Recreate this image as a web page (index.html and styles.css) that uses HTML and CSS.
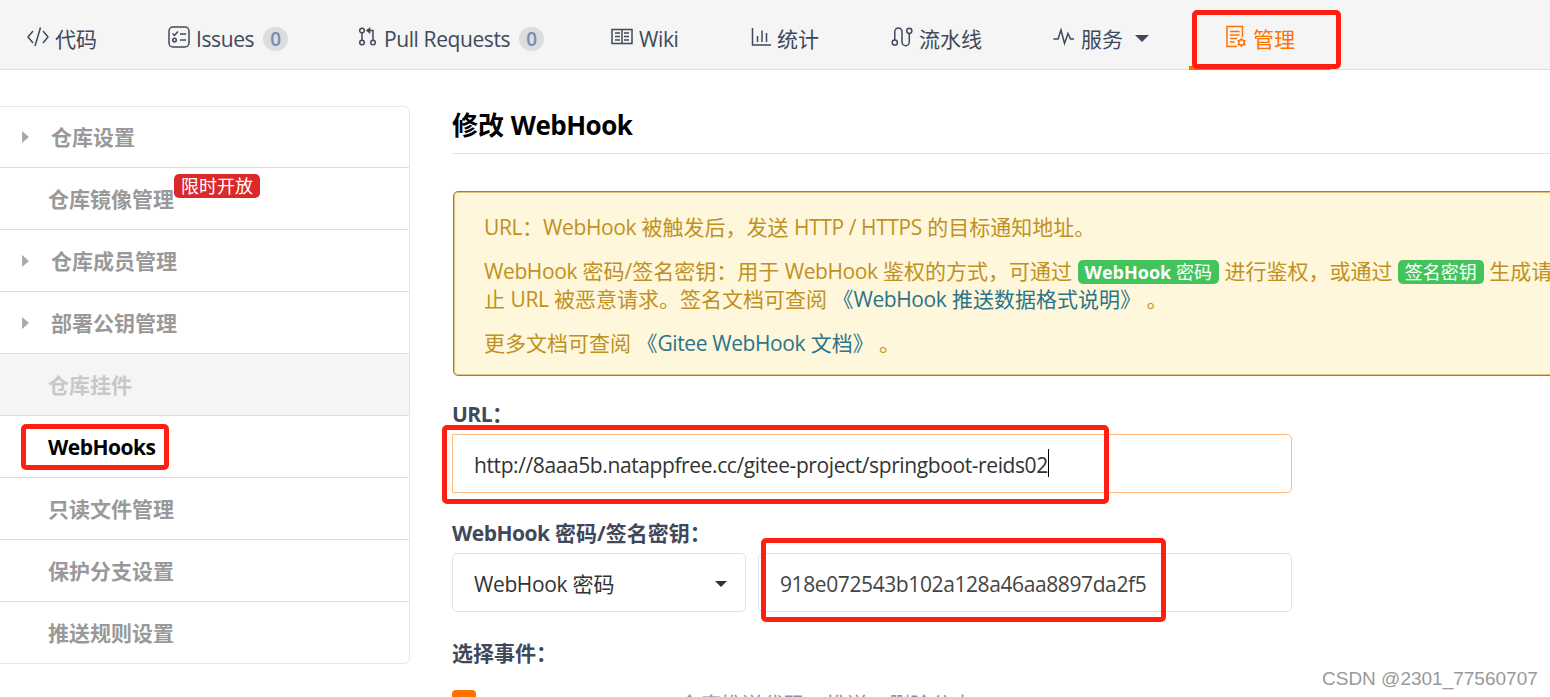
FILE: index.html
```html
<!DOCTYPE html>
<html lang="zh-CN">
<head>
    <meta charset="UTF-8">
    <meta name="viewport" content="width=device-width, initial-scale=1.0">
    <title>修改 WebHook</title>
    <link rel="stylesheet" href="styles.css">
</head>
<body>
    <!-- Repository tabs -->
    <nav class="repo-nav">
        <a class="nav-item first">
            <svg class="icon" width="22" height="22" viewBox="0 0 22 22"><path d="M6 5L1 11l5 6M16 5l5 6-5 6M13.5 1.500l-5.500 18.500"/></svg>
            <span>代码</span>
        </a>
        <a class="nav-item">
            <svg class="icon" width="22" height="22" viewBox="0 0 22 22"><rect x="1" y="1" width="20" height="20" rx="4"/><path d="M4.500 7.500l2 2 3.500-4M12 8h6M12 14h6"/><circle cx="6.500" cy="14" r="1.800"/></svg>
            <span class="en">Issues</span>
            <span class="count">0</span>
        </a>
        <a class="nav-item">
            <svg class="icon pr" width="20" height="22" viewBox="0 0 20 22"><circle cx="4" cy="4.500" r="2.300"/><circle cx="4" cy="16.500" r="2.300"/><circle cx="15" cy="16.500" r="2.300"/><path d="M4 7v7M15 14V4.500H9M11.500 2.500L9 4.500l2.500 2z"/></svg>
            <span class="en">Pull Requests</span>
            <span class="count">0</span>
        </a>
        <a class="nav-item">
            <svg class="icon" width="22" height="22" viewBox="0 0 22 22"><rect x="1" y="3.500" width="20" height="14"/><path d="M11 3.500v14M4 7h5M4 10.500h5M4 14h5M13 7h5M13 10.500h5M13 14h5"/></svg>
            <span class="en">Wiki</span>
        </a>
        <a class="nav-item">
            <svg class="icon" width="20" height="22" viewBox="0 0 20 22"><path d="M1.500 2v17H20M6.500 10v6M11 4.500v11.500M15.500 7v9"/></svg>
            <span>统计</span>
        </a>
        <a class="nav-item">
            <svg class="icon" width="22" height="22" viewBox="0 0 22 22"><circle cx="3.800" cy="16.500" r="2.600"/><circle cx="18.300" cy="4.800" r="2.600"/><path d="M3.800 14V5.500a3.400 3.400 0 0 1 7.200 0v10.500a3.600 3.600 0 0 0 7.300 0V7.500"/></svg>
            <span>流水线</span>
        </a>
        <a class="nav-item">
            <svg class="icon" width="22" height="22" viewBox="0 0 22 22"><path d="M.5 13H5l3-9 3.500 13.500 3.500-10 2.500 5.500H21"/></svg>
            <span>服务</span>
            <span class="caret"></span>
        </a>
        <a class="nav-item active">
            <svg class="icon" width="22" height="24" viewBox="0 0 22 24"><path d="M17.500 12V1.500H2v20h10M5 6.500h9.500M5 10h9.500M5 13.500h7M5 17h4.500"/><circle cx="16.500" cy="17.500" r="2.800"/><path d="M16.500 13v2M16.500 20v2M12.600 15.300l1.700 1M18.800 18.800l1.700 1M12.600 19.800l1.700-1M18.800 16.300l1.700-1"/></svg>
            <span>管理</span>
        </a>
    </nav>

    <div class="page">
        <!-- Settings menu -->
        <aside class="side-menu">
            <a class="menu-item expand"><i class="arrow"></i>仓库设置</a>
            <a class="menu-item">仓库镜像管理<span class="tag">限时开放</span></a>
            <a class="menu-item expand"><i class="arrow"></i>仓库成员管理</a>
            <a class="menu-item expand"><i class="arrow"></i>部署公钥管理</a>
            <a class="menu-item disabled">仓库挂件</a>
            <a class="menu-item current"><span class="en-bold">WebHooks</span></a>
            <a class="menu-item">只读文件管理</a>
            <a class="menu-item">保护分支设置</a>
            <a class="menu-item">推送规则设置</a>
        </aside>

        <main class="content">
            <h1>修改 <span class="en-title">WebHook</span></h1>

            <div class="message">
                <p><span class="en">URL</span>：<span class="en">WebHook</span> 被触发后，发送 <span class="en">HTTP / HTTPS</span> 的目标通知地址。</p>
                <p><span class="en">WebHook</span> 密码/签名密钥：用于 <span class="en">WebHook</span> 鉴权的方式，可通过 <span class="label"><b>WebHook</b> 密码</span> 进行鉴权，或通过 <span class="label">签名密钥</span> 生成请求签名<br>止 <span class="en">URL</span> 被恶意请求。签名文档可查阅 <a class="link">《<span class="en">WebHook</span> 推送数据格式说明》</a> 。</p>
                <p>更多文档可查阅 <a class="link">《<span class="en">Gitee WebHook</span> 文档》</a> 。</p>
            </div>

            <form>
                <label class="field-label"><span class="en-bold">URL</span>：</label>
                <div class="input focus"><span class="en-input">http://8aaa5b.natappfree.cc/gitee-project/springboot-reids02</span><i class="cursor"></i></div>

                <label class="field-label"><span class="en-bold">WebHook</span> 密码/签名密钥：</label>
                <div class="field-row">
                    <div class="input select"><span><span class="en">WebHook</span> 密码</span><span class="caret"></span></div>
                    <div class="input secret"><span class="en-secret">918e072543b102a128a46aa8897da2f5</span></div>
                </div>

                <label class="field-label">选择事件：</label>
                <div class="event">
                    <span class="checkbox"></span>
                    <span class="event-desc">仓库推送代码、推送、删除分支</span>
                </div>
            </form>
        </main>
    </div>

    <!-- Highlight frames -->
    <div class="mark mark-manage"></div>
    <div class="mark mark-webhooks"></div>
    <div class="mark mark-url"></div>
    <div class="mark mark-secret"></div>
    <div class="watermark">CSDN @2301_77560707</div>
</body>
</html>
```
FILE: styles.css
```css
* {
    box-sizing: border-box;
}

body {
    margin: 0;
    width: 1550px;
    height: 697px;
    overflow: hidden;
    position: relative;
    background-color: #fff;
    color: #40485b;
    font-family: "Open Sans", "Noto Sans CJK SC", sans-serif;
    font-size: 21px;
    line-height: 28px;
}

/* Latin text runs slightly narrower than the Chinese text */
.en {
    letter-spacing: -0.4px;
}

.en-bold {
    letter-spacing: -0.5px;
}

.en-title {
    letter-spacing: -0.5px;
}

.en-input, .en-secret {
    letter-spacing: -0.4px;
}

/* Top navigation */
.repo-nav {
    display: grid;
    grid-template-columns: 132px 190px 253px 140px 140px 162px 172px 141px;
    height: 70px;
    background-color: #f5f5f5;
    border-bottom: 1px solid #dcdddf;
}

.nav-item {
    display: flex;
    align-items: center;
    padding: 7px 0 0 36px;
    height: 70px;
    white-space: nowrap;
}

.nav-item.first {
    padding-left: 27px;
}

.nav-item.active {
    color: #fe7300;
    border-bottom: 4px solid #fe7300;
    padding-top: 11px;
}

.icon {
    flex: none;
    margin: -4px 6px 0 0;
    fill: none;
    stroke: currentColor;
    stroke-width: 1.5;
}

.count {
    width: 25px;
    height: 24px;
    margin-left: 9px;
    border-radius: 12px;
    background-color: #dcddde;
    color: #7b8cb3;
    font-size: 19px;
    font-weight: 600;
    line-height: 24px;
    text-align: center;
}

.caret {
    border: 7px solid transparent;
    border-top-color: currentColor;
    border-bottom: 0;
    margin-left: 12px;
}

/* Page body */
.page {
    display: flex;
    gap: 42px;
    padding-top: 36px;
}

.side-menu {
    flex: none;
    width: 410px;
    height: 558px;
    border: 1px solid #e3e6ea;
    border-left: 0;
    border-radius: 0 6px 6px 0;
    overflow: hidden;
}

.menu-item {
    display: flex;
    align-items: center;
    height: 62px;
    padding-left: 48px;
    border-bottom: 1px solid #dcdddf;
    color: #999;
    font-weight: bold;
}

.menu-item:first-child {
    height: 61px;
}

.menu-item:last-child {
    border-bottom: 0;
}

.menu-item.expand {
    padding-left: 22px;
}

.menu-item.disabled {
    background-color: #f5f5f5;
    color: #c8c8c8;
}

.menu-item.current {
    color: #000;
}

.arrow {
    border: 6px solid transparent;
    border-left: 7px solid #aaa;
    border-right: 0;
    margin-right: 22px;
}

.tag {
    height: 24px;
    margin-bottom: 25px;
    padding: 0 7px;
    border-radius: 5px;
    background-color: #db2828;
    color: #fff;
    font-size: 18px;
    font-weight: normal;
    line-height: 24px;
}

.content {
    flex: none;
    width: 1200px;
}

h1 {
    margin: 0;
    height: 48px;
    border-bottom: 1px solid #e3e3e3;
    color: #000;
    font-size: 26px;
    line-height: 38px;
}

.message {
    height: 185px;
    margin: 37px 0 0 1px;
    padding: 21px 30px;
    border: 1px solid #b58105;
    border-radius: 5px;
    box-shadow: inset 0 0 0 1px #dcc27f;
    background-color: #fff7db;
    color: #c09122;
    white-space: nowrap;
}

.message p {
    margin: 0 0 16px;
}

.link {
    color: #2b7489;
}

.label {
    display: inline-block;
    height: 24px;
    padding: 0 7px;
    border-radius: 5px;
    background-color: #43c35b;
    color: #fff;
    font-size: 18px;
    line-height: 24px;
    vertical-align: 0;
}

/* Form */
.field-label {
    display: block;
    height: 20px;
    font-weight: bold;
    line-height: 20px;
}

form {
    padding-top: 28px;
}

.input {
    display: flex;
    align-items: center;
    width: 840px;
    height: 59px;
    padding: 3px 21px 0;
    border: 1px solid #dfe1e6;
    border-radius: 5px;
    background-color: #fff;
    color: #333;
}

.input.focus {
    margin: 10px 0 30px;
    border-color: #ffb97f;
    border-radius: 0 5px 5px 0;
}

.cursor {
    width: 1px;
    height: 28px;
    margin-top: -4px;
    background-color: #000;
}

.field-row {
    display: flex;
    gap: 12px;
    margin: 10px 0 31px;
}

.input.select {
    width: 294px;
    justify-content: space-between;
    padding-right: 18px;
}

.select .caret {
    border-width: 6px 6px 0;
}

.input.secret {
    width: 534px;
    color: #444;
}

.event {
    display: flex;
    margin-top: 27px;
}

.checkbox {
    width: 24px;
    height: 24px;
    border-radius: 4px;
    background-color: #fe7300;
}

.event-desc {
    margin-left: 203px;
    color: #8c92a4;
}

/* Red frames over the page */
.mark {
    position: absolute;
    border: 5px solid #ff1e10;
    border-radius: 5px;
}

.mark-manage {
    left: 1192px;
    top: 10px;
    width: 149px;
    height: 59px;
}

.mark-webhooks {
    left: 21px;
    top: 424px;
    width: 148px;
    height: 46px;
}

.mark-url {
    left: 442px;
    top: 425px;
    width: 667px;
    height: 79px;
}

.mark-secret {
    left: 761px;
    top: 538px;
    width: 405px;
    height: 84px;
}

.watermark {
    position: absolute;
    left: 1322px;
    top: 665px;
    color: #999;
    font-family: "Liberation Sans", sans-serif;
    font-size: 19px;
    white-space: nowrap;
}
```
